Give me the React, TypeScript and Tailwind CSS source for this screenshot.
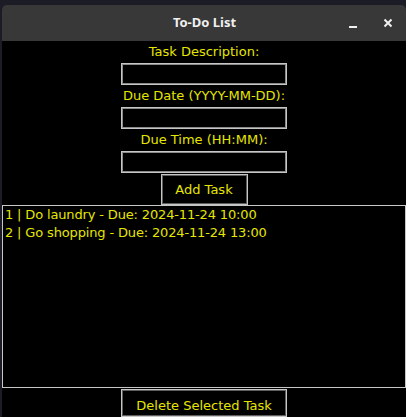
import { useState } from 'react';

const tasks = [
  { id: 1, text: 'Do laundry', date: '2024-11-24', time: '10:00' },
  { id: 2, text: 'Go shopping', date: '2024-11-24', time: '13:00' },
];

const font = "font-['DejaVu_Sans',sans-serif]";

const Field = ({ label, value, onChange }: { label: string; value: string; onChange: (v: string) => void }) => (
  <>
    <div className="h-[22px] flex items-center text-[13px] leading-[16px] text-[#e6e600]">{label}</div>
    <input
      value={value}
      onChange={(e) => onChange(e.target.value)}
      className="w-[166px] h-[22px] bg-black border border-[#c6c6c6] shadow-[inset_0_0_0_1px_#8a8a8a] text-[13px] text-[#e6e600] px-1 outline-none"
    />
  </>
);

export default function App() {
  const [desc, setDesc] = useState('');
  const [date, setDate] = useState('');
  const [time, setTime] = useState('');

  return (
    <div className={`w-[406px] h-[417px] bg-[#1c1c27] pl-[2px] pt-[5px] flex flex-col overflow-hidden ${font}`}>
      <div className="flex-1 flex flex-col rounded-t-[5px] overflow-hidden">
        {/* title bar */}
        <div className="h-[36px] shrink-0 bg-[#383838] grid grid-cols-[1fr_auto_1fr] items-center">
          <div />
          <div className="font-['Noto_Sans',sans-serif] font-bold text-[13px] text-[#f0f0f0] pl-[1px]">To-Do List</div>
          <div className="flex justify-end items-center gap-[25px] pr-[13px]">
            <svg width="10" height="10" viewBox="0 0 10 10" className="mt-[4px]">
              <rect x="1" y="6" width="8" height="2" fill="#f0f0f0" />
            </svg>
            <svg width="10" height="10" viewBox="0 0 10 10">
              <path d="M1.5 1.5 L8.5 8.5 M8.5 1.5 L1.5 8.5" stroke="#f0f0f0" strokeWidth="2" />
            </svg>
          </div>
        </div>

        {/* body */}
        <div className="flex-1 bg-black flex flex-col items-center">
          <Field label="Task Description:" value={desc} onChange={setDesc} />
          <Field label="Due Date (YYYY-MM-DD):" value={date} onChange={setDate} />
          <Field label="Due Time (HH:MM):" value={time} onChange={setTime} />

          <button className="mt-[1px] w-[87px] h-[31px] bg-black border border-[#c6c6c6] shadow-[inset_0_0_0_1px_#5e5e5e] text-[13px] text-[#e6e600]">
            Add Task
          </button>

          <div className="self-stretch h-[183px] border border-[#c6c6c6] pl-[2px] text-[13px] leading-[18px] tracking-[-0.15px] text-[#e6e600]">
            {tasks.map((t) => (
              <div key={t.id} className="whitespace-pre">
                {t.id} | {t.text} - Due: {t.date} {t.time}
              </div>
            ))}
          </div>

          <button className="mt-[1px] w-[166px] flex-1 bg-black border border-[#c6c6c6] shadow-[inset_0_0_0_1px_#5e5e5e] text-[13px] text-[#e6e600] flex items-start justify-center pt-[6px]">
            Delete Selected Task
          </button>
        </div>
      </div>
    </div>
  );
}
